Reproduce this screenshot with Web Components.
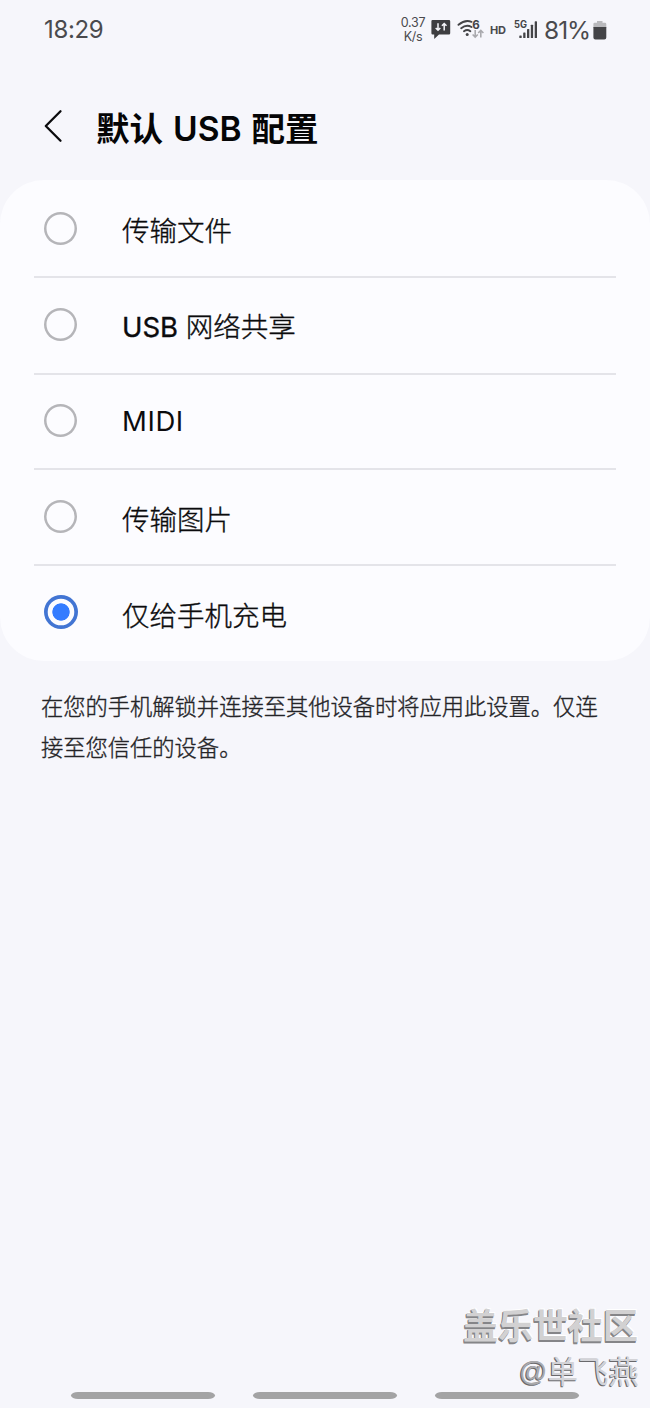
<!DOCTYPE html>
<html lang="zh-CN">
<head>
<meta charset="utf-8">
<meta name="viewport" content="width=device-width">
<title>默认 USB 配置</title>
<style>
html,body{margin:0;padding:0;background:#f6f6fb}
body{font-family:Inter,"Noto Sans CJK SC",sans-serif;color:#0b0b0d}
</style>
</head>
<body>
<settings-screen></settings-screen>
<script>
const define = (name, html) => customElements.define(name, class extends HTMLElement {
  constructor() {
    super();
    const t = document.createElement('template');
    t.innerHTML = html;
    this.attachShadow({mode: 'open'}).append(t.content.cloneNode(true));
  }
});

define('status-bar', `
<style>
:host{display:flex;height:60px;box-sizing:border-box;padding:0 43px 0 44px;align-items:center;color:#4a4a4d;white-space:nowrap}
.time{font:400 24px/30px Inter,sans-serif;letter-spacing:-.35px;flex:1}
.speed{font:400 12.500px/14px Inter,sans-serif;text-align:center;width:26px;letter-spacing:-.3px;margin-right:5px}
.speed span{display:block}
.hd{font:700 11px/14px Inter,sans-serif;width:17px;margin:-1px 7px 0 5px;letter-spacing:-.3px}
.pct{font:400 24.500px/30px Inter,sans-serif;letter-spacing:-1px;width:46px;margin:0 3px 0 6px}
svg{display:block;flex:none}
text{font-family:Inter,sans-serif;font-weight:700}
</style>
<span class="time">18:29</span>
<div class="speed"><span>0.37</span><span>K/s</span></div>
<svg width="20" height="22" viewBox="0 0 20 22"><path fill="#3e3e41" d="M1.500 1h16.500q1.200 0 1.200 1.200v12q0 1.200-1.200 1.200H8l-4.800 4.700v-4.700H1.600Q.4 15.400.4 14.200V2.200Q.4 1 1.500 1z"/><path d="M7 4.200v7M4.700 9L7 11.300 9.300 9M13.200 11.600v-7M10.900 6.800l2.300-2.300 2.300 2.300" stroke="#f6f6fb" stroke-width="1.500" fill="none"/></svg>
<svg width="28" height="22" viewBox="0 0 28 22" style="margin-left:6px"><g stroke="#444447" stroke-width="1.900" fill="none" stroke-linecap="round"><path d="M1.500 5.800Q8 .3 14.500 2.800M4.200 9.200Q9.300 5.100 14.500 8M7 12.200Q10.300 9.800 13.300 12.200"/></g><circle cx="10.200" cy="15.600" r="1.500" fill="#444447"/><text x="15.300" y="10.300" font-size="11.500" fill="#444447">6</text><path d="M18.200 11v7M15.600 15.500l2.600 2.600 2.600-2.600M23.800 18.500v-7M21.200 14l2.600-2.600 2.600 2.600" stroke="#aaaaae" stroke-width="1.600" fill="none"/></svg>
<span class="hd">HD</span>
<svg width="24" height="22" viewBox="0 0 24 22"><text x="0" y="8.500" font-size="10" textLength="13" lengthAdjust="spacingAndGlyphs" fill="#444447">5G</text><g fill="#444447"><rect x="5.300" y="16.500" width="2.400" height="2.500" rx=".6"/><rect x="9.200" y="13.500" width="2.300" height="5.500" rx=".6"/><rect x="13" y="10" width="2.300" height="9" rx=".6"/><rect x="16.800" y="5.700" width="2.300" height="13.300" rx=".6"/><rect x="20.700" y="2.300" width="2.300" height="16.700" rx=".6"/></g></svg>
<span class="pct">81%</span>
<svg width="14" height="20" viewBox="0 0 14 20"><path d="M4 1h5.500v1.700H12q1.300 0 1.300 1.300v4H.4V4q0-1.300 1.300-1.300H4z" fill="#b9b9bc"/><path d="M.4 7h12.900v10.500q0 2-2 2H2.400q-2 0-2-2z" fill="#444447"/></svg>
`);

define('page-header', `
<style>
:host{display:flex;height:120px;box-sizing:border-box;padding:12px 0 0 43px;align-items:center}
svg{display:block;margin-right:33px}
h1{margin:0;font:600 33.500px/44px Inter,"Noto Sans CJK SC",sans-serif;color:#050506;white-space:nowrap;display:flex;gap:10px;padding-top:5px}
.latin{letter-spacing:.3px}
</style>
<svg width="20" height="34" viewBox="0 0 20 34"><path d="M17.500 2.300L2.800 17l14.700 14.700" fill="none" stroke="#0b0b0d" stroke-width="2.300" stroke-linecap="round" stroke-linejoin="round"/></svg>
<h1><slot></slot></h1>
`);

define('option-list', `
<style>
:host{display:grid;grid-template-rows:98px 97px 95px 96px 95px;height:481px;background:#fcfcff;border-radius:44px}
::slotted(:nth-child(1)){--lift:-1px}
::slotted(:nth-child(2)),::slotted(:nth-child(3)){--lift:3px}
::slotted(:nth-child(n+4)){--drop:7px}
</style><slot></slot>
`);

define('radio-option', `
<style>
:host{display:flex;align-items:center;box-sizing:border-box;margin:0 34px;padding:0 0 max(0px,var(--lift,1px)) 10px;border-bottom:2px solid #e4e4e9}
:host(:last-of-type){border-bottom-color:transparent}
.ring{width:33px;height:33px;box-shadow:inset 0 0 0 2.500px #b5b5b9;border-radius:50%;margin-right:45px;flex:none}
:host([checked]) .ring{width:34px;height:34px;margin-right:44px;box-shadow:inset 0 0 0 3.700px #4275d3;background:radial-gradient(circle,#347cff 8.300px,transparent 9px)}
.label{font:400 27.500px/40px Inter,"Noto Sans CJK SC Light","Noto Sans CJK SC",sans-serif;color:#0b0b0d;padding-top:var(--drop,5px);white-space:nowrap}
.cjk{-webkit-text-stroke:.35px currentColor}
:host([latin]) .label{letter-spacing:.6px;padding-top:1px;-webkit-text-stroke:0}
</style>
<span class="ring"></span><span class="label cjk"><slot></slot></span>
`);

define('help-text', `
<style>
:host{display:block;padding:24px 40px 0 41px;font:400 22.270px/41px "Noto Sans CJK SC Light","Noto Sans CJK SC",sans-serif;color:#242427;white-space:nowrap;-webkit-text-stroke:.35px currentColor}
::slotted(span){display:block}
</style><slot></slot>
`);

define('nav-bar', `
<style>
:host{display:flex;gap:38px;padding:0 0 9px 71px}
i{width:144px;height:7px;border-radius:7px/3.500px;background:#a3a3a4}
</style><i></i><i></i><i></i>
`);

define('community-mark', `
<style>
:host{position:absolute;right:12px;bottom:11px;display:flex;flex-direction:column;align-items:flex-end;white-space:nowrap;font-family:"Noto Sans CJK SC",sans-serif}
.site{font-weight:700;font-size:35px;line-height:46px;color:#d2d1d2;text-shadow:-1px 1px 0 #858588,-1px 2px 0 #858588,1px -1px 0 #fff}
.user{font-size:30.500px;line-height:46px;color:#d3d3d7;text-shadow:-1px 1px 0 #69696c,-1px 0 0 #8b8b8e;margin-right:-1px}
.at{font:28px/46px "Liberation Sans",sans-serif;color:#ababae;position:relative;top:-2px}
</style>
<span class="site">盖乐世社区</span><span class="user"><span class="at">@</span>单飞燕</span>
`);

define('settings-screen', `
<style>
:host{position:relative;display:flex;flex-direction:column;width:650px;height:1408px;background:#f6f6fb;overflow:hidden}
nav-bar{margin-top:auto}
</style>
<status-bar></status-bar>
<page-header><span>默认</span><span class="latin">USB</span><span>配置</span></page-header>
<option-list>
<radio-option>传输文件</radio-option>
<radio-option>USB 网络共享</radio-option>
<radio-option latin>MIDI</radio-option>
<radio-option>传输图片</radio-option>
<radio-option checked>仅给手机充电</radio-option>
</option-list>
<help-text><span>在您的手机解锁并连接至其他设备时将应用此设置。仅连</span><span>接至您信任的设备。</span></help-text>
<nav-bar></nav-bar>
<community-mark></community-mark>
`);
</script>
</body>
</html>
